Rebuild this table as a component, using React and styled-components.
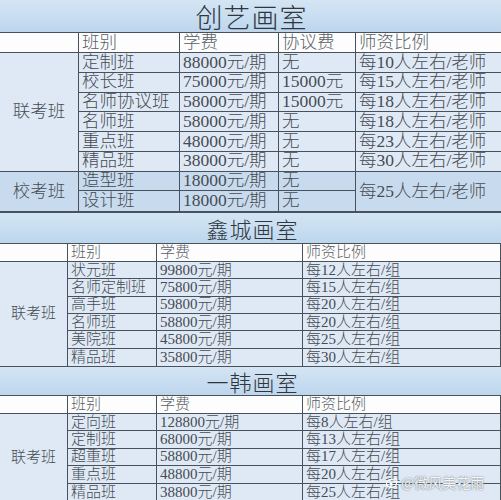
import React from 'react';
import styled, { createGlobalStyle } from 'styled-components';

const Global = createGlobalStyle`
  html, body { margin: 0; padding: 0; background: #dfe9f5; }
`;

const LINE = '#48525c';
const FONT = '"Liberation Serif", "Noto Sans CJK SC", serif';

const Page = styled.div`
  position: relative;
  width: 501px;
  height: 500px;
  overflow: hidden;
  background: #dfe9f5;
  font-family: ${FONT};
  color: #4a4f55;
`;

const TitleBand = styled.div`
  height: ${(p) => p.$h}px;
  display: flex;
  align-items: center;
  justify-content: center;
  padding-left: ${(p) => p.$shift || 0}px;
  box-sizing: border-box;
  background: linear-gradient(#d4e5f4, #bdd6ed);
  border-bottom: 1px solid ${LINE};
  font-family: "Noto Sans CJK SC", sans-serif;
  font-weight: 300;
  font-size: ${(p) => p.$size}px;
  line-height: 1;
  letter-spacing: ${(p) => p.$spacing || 0}px;
  color: #30363c;
`;

const Grid = styled.div`
  display: grid;
  grid-template-columns: ${(p) => p.$cols};
  grid-template-rows: ${(p) => p.$rows};
  border-bottom: ${(p) => p.$bottom || 1}px solid ${LINE};
`;

const Cell = styled.div`
  box-sizing: border-box;
  grid-row: span ${(p) => p.$span || 1};
  display: flex;
  align-items: center;
  justify-content: ${(p) => (p.$center ? 'center' : 'flex-start')};
  padding-left: ${(p) => (p.$center ? 0 : 3)}px;
  background: ${(p) => p.$bg || '#dfe9f5'};
  border-right: ${(p) => (p.$last ? 'none' : `1px solid ${LINE}`)};
  border-bottom: ${(p) => (p.$noBottom ? 'none' : `${p.$line || 1}px solid ${LINE}`)};
  font-size: ${(p) => p.$size}px;
  font-weight: 300;
  line-height: 1;
  white-space: nowrap;
  overflow: hidden;
  color: ${(p) => (p.$head ? '#5a5f66' : '#464b52')};
`;

const Watermark = styled.div`
  position: absolute;
  left: 386px;
  top: 472px;
  display: flex;
  align-items: center;
  gap: 3px;
  font-family: "Noto Sans CJK SC", sans-serif;
  font-size: 14px;
  color: rgba(255, 255, 255, 0.92);
  text-shadow: 0 0 1px #7d8790, 0 0 2px #8d97a0;
`;

const s1Rows = [
  ['定制班', '88000元/期', '无', '每10人左右/老师'],
  ['校长班', '75000元/期', '15000元', '每15人左右/老师'],
  ['名师协议班', '58000元/期', '15000元', '每18人左右/老师'],
  ['名师班', '58000元/期', '无', '每18人左右/老师'],
  ['重点班', '48000元/期', '无', '每23人左右/老师'],
  ['精品班', '38000元/期', '无', '每30人左右/老师'],
];

const s2Rows = [
  ['状元班', '99800元/期', '每12人左右/组'],
  ['名师定制班', '75800元/期', '每15人左右/组'],
  ['高手班', '59800元/期', '每20人左右/组'],
  ['名师班', '58800元/期', '每20人左右/组'],
  ['美院班', '45800元/期', '每25人左右/组'],
  ['精品班', '35800元/期', '每30人左右/组'],
];

const s3Rows = [
  ['定向班', '128800元/期', '每8人左右/组'],
  ['定制班', '68000元/期', '每13人左右/组'],
  ['超重班', '58800元/期', '每17人左右/组'],
  ['重点班', '48800元/期', '每20人左右/组'],
  ['精品班', '38800元/期', '每25人左右/组'],
];

const WHITE = '#fdfdfd';
const SCHOOL = '#c8dbee';

function FirstStudio() {
  const size = 17.5;
  return (
    <>
      <TitleBand $h={33} $size={27} $spacing={1} $shift={2}>创艺画室</TitleBand>
      <Grid $cols="79px 101px 99px 77px 145px" $rows="20px repeat(8, 19.75px)" $bottom={2}>
        <Cell $bg={WHITE} $size={size} $line={1.5} />
        <Cell $bg={WHITE} $size={size} $line={1.5} $head>班别</Cell>
        <Cell $bg={WHITE} $size={size} $line={1.5} $head>学费</Cell>
        <Cell $bg={WHITE} $size={size} $line={1.5} $head>协议费</Cell>
        <Cell $bg={WHITE} $size={size} $line={1.5} $last $head>师资比例</Cell>
        <Cell $span={6} $center $size={size} $line={1.5}>联考班</Cell>
        {s1Rows.map((r) =>
          r.map((v, i) => (
            <Cell key={r[0] + r[1] + i} $size={size} $line={1.5} $last={i === 3}>{v}</Cell>
          ))
        )}
        <Cell $span={2} $center $size={size} $bg={SCHOOL} $noBottom>校考班</Cell>
        <Cell $size={size} $bg={SCHOOL} $line={1.5}>造型班</Cell>
        <Cell $size={size} $bg={SCHOOL} $line={1.5}>18000元/期</Cell>
        <Cell $size={size} $bg={SCHOOL} $line={1.5}>无</Cell>
        <Cell $span={2} $size={size} $bg={SCHOOL} $last $noBottom>每25人左右/老师</Cell>
        <Cell $size={size} $bg={SCHOOL} $noBottom>设计班</Cell>
        <Cell $size={size} $bg={SCHOOL} $noBottom>18000元/期</Cell>
        <Cell $size={size} $bg={SCHOOL} $noBottom>无</Cell>
      </Grid>
    </>
  );
}

function SmallStudio({ title, rows, titleH, rowH }) {
  const size = 15;
  return (
    <>
      <TitleBand $h={titleH} $size={22} $spacing={1} $shift={4}>{title}</TitleBand>
      <Grid $cols="68px 89px 146px 198px" $rows={`18px repeat(${rows.length}, ${rowH}px)`}>
        <Cell $bg={WHITE} $size={size} />
        <Cell $bg={WHITE} $size={size} $head>班别</Cell>
        <Cell $bg={WHITE} $size={size} $head>学费</Cell>
        <Cell $bg={WHITE} $size={size} $head>师资比例</Cell>
        <Cell $span={rows.length} $center $size={size} $noBottom>联考班</Cell>
        {rows.map((r, ri) =>
          r.map((v, i) => (
            <Cell key={r[0] + r[1] + i} $size={size} $noBottom={ri === rows.length - 1}>{v}</Cell>
          ))
        )}
      </Grid>
    </>
  );
}

function WeiboMark() {
  return (
    <svg width="12" height="11" viewBox="0 0 12 11">
      <ellipse cx="5.5" cy="6.5" rx="5" ry="3.8" fill="none" stroke="#fff" strokeWidth="1.2" />
      <circle cx="5" cy="7" r="1.6" fill="#fff" />
      <path d="M8 1.5 A3 3 0 0 1 11 4.5" fill="none" stroke="#fff" strokeWidth="1.1" />
    </svg>
  );
}

export default function App() {
  return (
    <Page>
      <Global />
      <FirstStudio />
      <SmallStudio title="鑫城画室" rows={s2Rows} titleH={31} rowH={17.33} />
      <SmallStudio title="一韩画室" rows={s3Rows} titleH={29} rowH={17.4} />
      <Watermark>
        <WeiboMark />
        <span>@微风美花雨</span>
      </Watermark>
    </Page>
  );
}
